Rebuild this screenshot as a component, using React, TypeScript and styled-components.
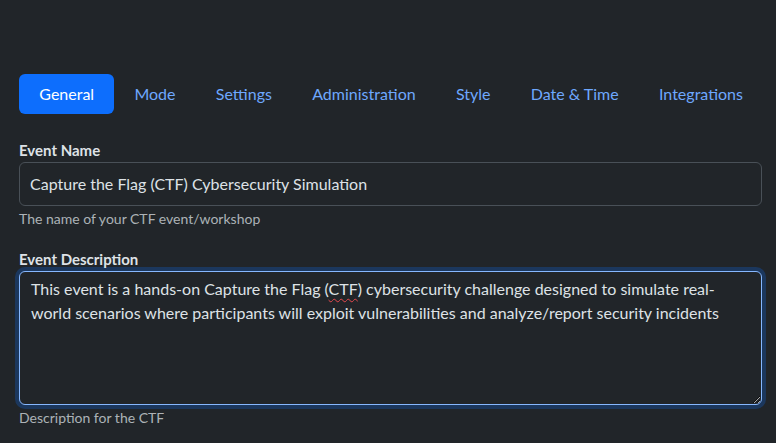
import * as React from "react";
import styled, { createGlobalStyle } from "styled-components";

const GlobalStyle = createGlobalStyle`
  html, body {
    margin: 0;
    padding: 0;
    background: #212529;
  }
  body {
    font-family: Lato, "Noto Sans", sans-serif;
    color: #dee2e6;
  }
  * {
    box-sizing: border-box;
  }
`;

const Page = styled.main`
  padding: 74px 14px 0 19px;
  min-height: 443px;
`;

const TabBar = styled.nav`
  display: flex;
  margin-bottom: 25px;
`;

const Tab = styled.a<{ $active?: boolean }>`
  display: block;
  flex-shrink: 0;
  white-space: nowrap;
  padding: 8px 20px 8px 20.3px;
  font-size: 16px;
  line-height: 24px;
  border-radius: 6px;
  text-decoration: none;
  cursor: pointer;
  color: ${(p) => (p.$active ? "#ffffff" : "#6ea8fe")};
  background: ${(p) => (p.$active ? "#0d6efd" : "transparent")};
`;

const Field = styled.div`
  margin-bottom: 19px;
`;

const Label = styled.label`
  display: block;
  font-size: 15px;
  font-weight: 700;
  line-height: 22.5px;
  color: #dee2e6;
`;

const Input = styled.input`
  display: block;
  width: 100%;
  height: 44px;
  padding: 9px 10px;
  font-family: inherit;
  font-size: 16px;
  line-height: 24px;
  color: #dee2e6;
  background: #212529;
  border: 1px solid #495057;
  border-radius: 6px;
  outline: none;
`;

const TextArea = styled.div`
  width: 100%;
  height: 134px;
  margin-top: 1px;
  padding: 5px 11px;
  font-size: 16px;
  line-height: 24px;
  color: #dee2e6;
  background: #212529;
  border: 1px solid #86b7fe;
  border-radius: 6px;
  box-shadow: 0 0 0 4px rgba(13, 110, 253, 0.25);
  overflow: auto;
  resize: vertical;
  outline: none;
`;

const Misspelled = styled.span`
  text-decoration: underline wavy #e5484d;
  text-decoration-thickness: 1px;
  text-underline-offset: 3px;
`;

const Help = styled.div`
  margin-top: 2px;
  font-size: 14px;
  line-height: 21px;
  color: rgba(222, 226, 230, 0.75);
`;

const tabs = ["General", "Mode", "Settings", "Administration", "Style", "Date & Time", "Integrations"];

export default function App() {
  const [active, setActive] = React.useState("General");

  return (
    <>
      <GlobalStyle />
      <Page>
        <TabBar>
          {tabs.map((t) => (
            <Tab key={t} $active={t === active} onClick={() => setActive(t)}>
              {t}
            </Tab>
          ))}
        </TabBar>

        <Field>
          <Label htmlFor="event-name">Event Name</Label>
          <Input
            id="event-name"
            defaultValue="Capture the Flag (CTF) Cybersecurity Simulation"
          />
          <Help>The name of your CTF event/workshop</Help>
        </Field>

        <Field>
          <Label>Event Description</Label>
          <TextArea contentEditable suppressContentEditableWarning>
            This event is a hands-on Capture the Flag (<Misspelled>CTF</Misspelled>) cybersecurity
            challenge designed to simulate real-world scenarios where participants will exploit
            vulnerabilities and analyze/report security incidents
          </TextArea>
          <Help>Description for the CTF</Help>
        </Field>
      </Page>
    </>
  );
}
